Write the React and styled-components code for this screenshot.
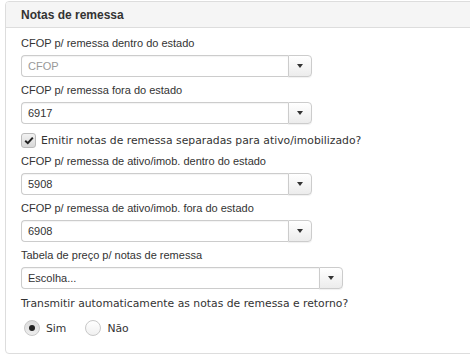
import styled, {createGlobalStyle} from 'styled-components'

const GlobalStyle = createGlobalStyle`
  html, body {
    margin: 0;
    padding: 0;
    background: #fff;
    overflow: hidden;
  }
  body {
    font-family: "Liberation Sans", Arial, sans-serif;
    color: #333;
  }
`

const Page = styled.div`
  padding: 1px 0 0 5px;
`

const Panel = styled.section`
  width: 500px;
  border: 1px solid #ddd;
  border-radius: 4px;
  background: #fff;
  margin-bottom: 5px;
`

const PanelHeader = styled.header`
  height: 25px;
  padding: 0 15px;
  display: flex;
  align-items: center;
  background: #f5f5f5;
  border-bottom: 1px solid #ddd;
  border-radius: 3px 3px 0 0;
  font-size: 12px;
  font-weight: bold;
  color: #333;
`

const PanelBody = styled.div`
  padding: 8px 15px 17px;
  display: flex;
  flex-direction: column;
`

const Field = styled.div`
  display: flex;
  flex-direction: column;
  margin-top: ${(p) => p.$gap ?? 6}px;
`

const Label = styled.label`
  font-size: 11px;
  line-height: 14px;
  margin-bottom: 5px;
  color: #333;
`

const Select = styled.div`
  display: flex;
  width: ${(p) => p.$width}px;
  height: 22px;
  box-sizing: border-box;
`

const SelectValue = styled.div`
  flex: 1;
  display: flex;
  align-items: center;
  padding: 0 6px;
  border: 1px solid #ccc;
  border-right: none;
  border-radius: 4px 0 0 4px;
  font-size: 11px;
  color: ${(p) => (p.$placeholder ? '#999' : '#333')};
  box-shadow: inset 0 1px 1px rgba(0, 0, 0, 0.05);
`

const SelectButton = styled.div`
  width: 22px;
  display: flex;
  align-items: center;
  justify-content: center;
  border: 1px solid #ccc;
  border-radius: 0 4px 4px 0;
  background: linear-gradient(#fff, #ececec);
  box-shadow: 0 1px 1px rgba(0, 0, 0, 0.06);

  &::after {
    content: '';
    border-left: 3.5px solid transparent;
    border-right: 3.5px solid transparent;
    border-top: 4px solid #333;
  }
`

const OptionText = styled.span`
  font-family: "DejaVu Sans", Verdana, sans-serif;
  font-size: 10.8px;
  color: #333;
`

const CheckRow = styled.label`
  display: flex;
  align-items: center;
  gap: 5px;
  margin-top: 9px;
  height: 15px;
`

const Checkbox = styled.span`
  width: 15px;
  height: 15px;
  box-sizing: border-box;
  border: 1px solid #bbb;
  border-radius: 3px;
  background: linear-gradient(#f2f2f2, #d8d8d8);
  display: flex;
  align-items: center;
  justify-content: center;
`

const Question = styled(OptionText)`
  margin-top: 8px;
  line-height: 14px;
`

const RadioGroup = styled.div`
  display: flex;
  align-items: center;
  margin-top: 9px;
  padding-left: 3px;
  height: 16px;
`

const RadioOption = styled.label`
  display: flex;
  align-items: center;
  gap: 6px;
  margin-right: 19px;
`

const Radio = styled.span`
  width: 16px;
  height: 16px;
  box-sizing: border-box;
  border-radius: 50%;
  border: 1px solid #c8c8c8;
  background: ${(p) =>
    p.$checked ? 'linear-gradient(#dcdcdc, #eee)' : 'linear-gradient(#fff, #f0f0f0)'};
  display: flex;
  align-items: center;
  justify-content: center;

  &::after {
    content: '';
    display: ${(p) => (p.$checked ? 'block' : 'none')};
    width: 6px;
    height: 6px;
    border-radius: 50%;
    background: #222;
  }
`

const NextPanel = styled.div`
  width: 500px;
  height: 10px;
  border: 1px solid #ddd;
  border-bottom: none;
  border-radius: 4px 4px 0 0;
`

function CfopSelect({label, value, placeholder, width = 291, gap}) {
  return (
    <Field $gap={gap}>
      <Label>{label}</Label>
      <Select $width={width}>
        <SelectValue $placeholder={!value}>{value || placeholder}</SelectValue>
        <SelectButton />
      </Select>
    </Field>
  )
}

export default function App() {
  return (
    <Page>
      <GlobalStyle />
      <Panel>
        <PanelHeader>Notas de remessa</PanelHeader>
        <PanelBody>
          <CfopSelect label="CFOP p/ remessa dentro do estado" placeholder="CFOP" gap={0} />
          <CfopSelect label="CFOP p/ remessa fora do estado" value="6917" />

          <CheckRow>
            <Checkbox>
              <svg width="10" height="9" viewBox="0 0 10 9">
                <path d="M1.2 4.8 L3.8 7.2 L8.8 1.6" fill="none" stroke="#222" strokeWidth="2" />
              </svg>
            </Checkbox>
            <OptionText>Emitir notas de remessa separadas para ativo/imobilizado?</OptionText>
          </CheckRow>

          <CfopSelect
            label="CFOP p/ remessa de ativo/imob. dentro do estado"
            value="5908"
            gap={6}
          />
          <CfopSelect label="CFOP p/ remessa de ativo/imob. fora do estado" value="6908" />
          <CfopSelect
            label="Tabela de preço p/ notas de remessa"
            value="Escolha..."
            width={322}
          />

          <Question>Transmitir automaticamente as notas de remessa e retorno?</Question>
          <RadioGroup>
            <RadioOption>
              <Radio $checked />
              <OptionText>Sim</OptionText>
            </RadioOption>
            <RadioOption>
              <Radio />
              <OptionText>Não</OptionText>
            </RadioOption>
          </RadioGroup>
        </PanelBody>
      </Panel>
      <NextPanel />
    </Page>
  )
}
